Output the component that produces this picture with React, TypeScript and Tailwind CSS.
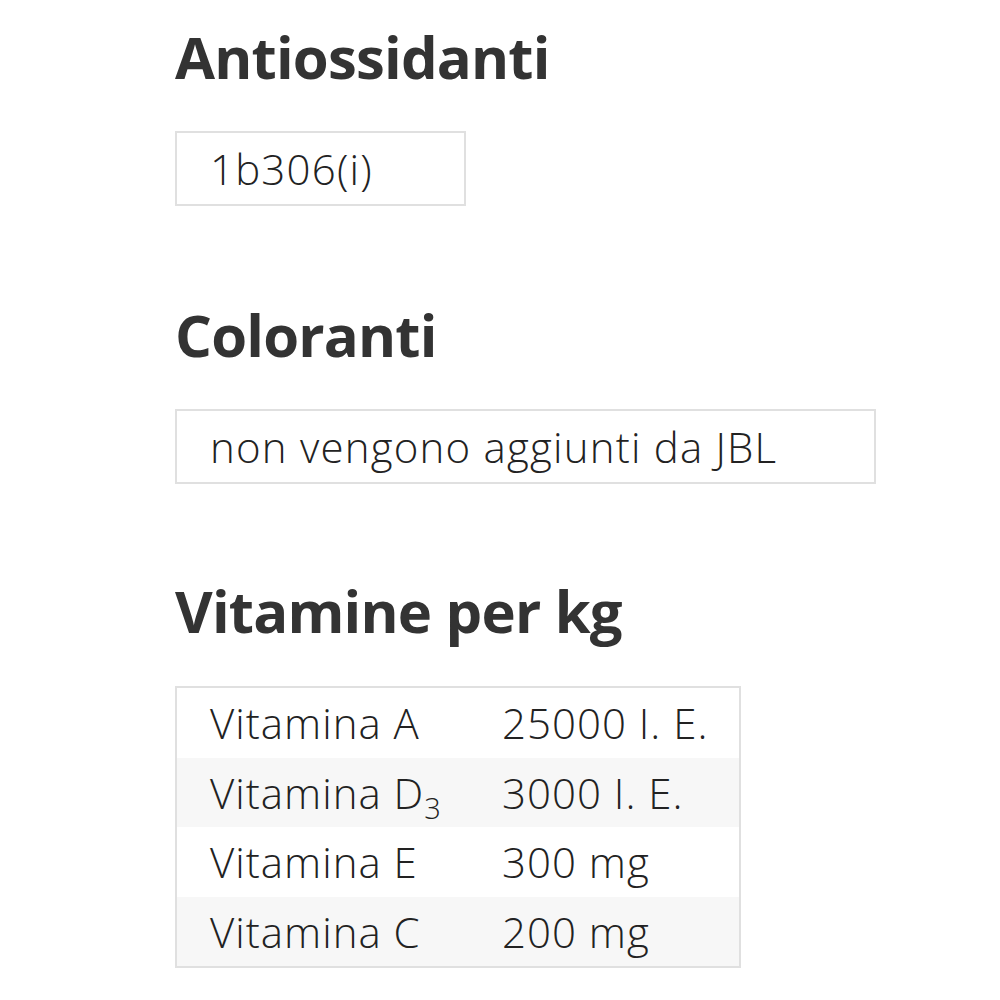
export default function App() {
  const rows: [React.ReactNode, string][] = [
    ["Vitamina A", "25000 I. E."],
    [<>Vitamina D<span className="text-[29px] tracking-normal align-[-10px] leading-none">3</span></>, "3000 I. E."],
    ["Vitamina E", "300 mg"],
    ["Vitamina C", "200 mg"],
  ];
  return (
    <div className="w-[1000px] h-[1000px] bg-white text-[#333] pl-[175px]" style={{ fontFamily: '"Open Sans", sans-serif' }}>
      <h2 className="pt-[22px] text-[58px] font-bold leading-[70px] tracking-[-0.8px]">Antiossidanti</h2>
      <div className="mt-[39px] w-[291px] h-[75px] border-2 border-[#e0e0e0] pl-[33px] flex items-center text-[42px] font-light tracking-[1.2px] text-[#222]">1b306(i)</div>
      <h2 className="mt-[94px] text-[58px] font-bold leading-[70px] tracking-[-0.8px]">Coloranti</h2>
      <div className="mt-[39px] w-[701px] h-[75px] border-2 border-[#e0e0e0] pl-[33px] flex items-center text-[42px] font-light tracking-[1.2px] text-[#222]">non vengono aggiunti da JBL</div>
      <h2 className="mt-[92px] text-[58px] font-bold leading-[70px] tracking-[-0.8px]">Vitamine per kg</h2>
      <div className="mt-[40px] w-[566px] border-2 border-[#e0e0e0] text-[42px] font-light tracking-[1px] text-[#222]">
        {rows.map((r, i) => (
          <div key={i} className={`flex h-[69.5px] items-center ${i % 2 === 1 ? "bg-[#f7f7f7]" : "bg-white"}`}>
            <div className="pl-[33px] w-[325px] whitespace-nowrap">{r[0]}</div>
            <div className="whitespace-nowrap">{r[1]}</div>
          </div>
        ))}
      </div>
    </div>
  );
}
